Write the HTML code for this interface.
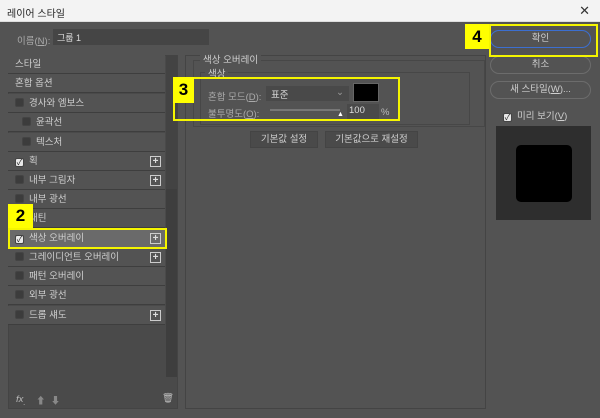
<!DOCTYPE html>
<html><head><meta charset="utf-8"><style>
*{margin:0;padding:0;box-sizing:border-box}
body{width:600px;height:418px;background:#535353;font-family:"Liberation Sans","Noto Sans CJK KR",sans-serif;font-size:9.5px;color:#cfcfcf;position:relative;overflow:hidden}
.a{position:absolute}
.title{left:0;top:0;width:600px;height:22px;background:#f3f3f3;color:#222;font-size:10px;padding:5px 7px;border-bottom:1px solid #ddd}
.row{position:absolute;left:8px;width:157px;height:19px;background:#535353;border-bottom:1px solid #3e3e3e;line-height:19px;padding-left:7px}
.cb{display:inline-block;width:9px;height:9px;background:#3c3c3c;border:1px solid #444;border-radius:2px;vertical-align:-1px;margin-right:5px}
.cb.on{background:#e8e8e8}
.cb.on::after{content:"✓";color:#222;font-size:8px;line-height:8px;display:block;text-align:center}
.plus{position:absolute;right:4px;top:4px;width:11px;height:11px;border:1px solid #ccc;color:#ddd;font-size:10px;line-height:9px;text-align:center;font-weight:bold}
.btn{position:absolute;left:490px;width:101px;height:18px;border:1px solid #6c6c6c;border-radius:9px;text-align:center;line-height:16px;color:#cfcfcf}
.yl{position:absolute;border:2px solid #f5f500}
.yn{position:absolute;background:#ffff00;color:#000;font-weight:bold;font-size:17px;text-align:center}
</style></head><body>
<div class="a title">레이어 스타일</div>
<div class="a" style="right:10px;top:3px;color:#333;font-size:13px">✕</div>
<div class="a" style="left:17px;top:33px;color:#aaa">이름(<u>N</u>):</div>
<div class="a" style="left:53px;top:29px;width:156px;height:16px;background:#454545;padding:2px 4px;color:#ddd;font-size:9px">그룹 1</div>

<div class="a" style="left:8px;top:55px;width:170px;height:354px;background:#4a4a4a;border:1px solid #444"></div>
<div class="a" style="left:166px;top:55px;width:11px;height:134px;background:#434343"></div>
<div class="a" style="left:166px;top:189px;width:11px;height:188px;background:#3e3e3e"></div>

<div class="row" style="top:55px">스타일</div>
<div class="row" style="top:74px">혼합 옵션</div>
<div class="row" style="top:94px"><span class="cb"></span>경사와 엠보스</div>
<div class="row" style="top:113px;padding-left:14px"><span class="cb"></span>윤곽선</div>
<div class="row" style="top:133px;padding-left:14px"><span class="cb"></span>텍스처</div>
<div class="row" style="top:152px"><span class="cb on"></span>획<span class="plus">+</span></div>
<div class="row" style="top:171px"><span class="cb"></span>내부 그림자<span class="plus">+</span></div>
<div class="row" style="top:190px"><span class="cb"></span>내부 광선</div>
<div class="row" style="top:209px"><span class="cb"></span>새틴</div>
<div class="row" style="top:229px;background:#6a6a6a"><span class="cb on"></span>색상 오버레이<span class="plus">+</span></div>
<div class="row" style="top:248px"><span class="cb"></span>그레이디언트 오버레이<span class="plus">+</span></div>
<div class="row" style="top:267px"><span class="cb"></span>패턴 오버레이</div>
<div class="row" style="top:286px"><span class="cb"></span>외부 광선</div>
<div class="row" style="top:306px"><span class="cb"></span>드롭 섀도<span class="plus">+</span></div>
<div class="a" style="left:16px;top:394px;font-style:italic;color:#bbb">fx<sub>.</sub></div>
<div class="a" style="left:36px;top:393px;color:#888">⬆ &nbsp;⬇</div>
<div class="a" style="left:162px;top:393px;color:#bbb">🗑</div>

<div class="a" style="left:185px;top:55px;width:301px;height:354px;border:1px solid #444"></div>
<div class="a" style="left:193px;top:60px;width:292px;height:67px;border:1px solid #474747"></div>
<div class="a" style="left:200px;top:52px;background:#535353;padding:0 3px">색상 오버레이</div>
<div class="a" style="left:200px;top:72px;width:270px;height:53px;border:1px solid #474747"></div>
<div class="a" style="left:205px;top:66px;background:#535353;padding:0 3px">색상</div>
<div class="a" style="left:208px;top:89px;color:#aaa">혼합 모드(<u>D</u>):</div>
<div class="a" style="left:266px;top:86px;width:83px;height:15px;background:#494949;padding:1px 5px;color:#ddd">표준<span style="float:right;color:#999">⌄</span></div>
<div class="a" style="left:353px;top:83px;width:26px;height:19px;background:#000;border:1px solid #666"></div>
<div class="a" style="left:208px;top:106px;color:#aaa">불투명도(<u>O</u>):</div>
<div class="a" style="left:270px;top:109px;width:70px;height:2px;background:#777"></div>
<div class="a" style="left:337px;top:111px;color:#fff;font-size:7px">▲</div>
<div class="a" style="left:347px;top:104px;width:32px;height:15px;background:#494949;padding:1px 2px;color:#ddd">100</div>
<div class="a" style="left:381px;top:107px;color:#bbb">%</div>
<div class="a" style="left:250px;top:131px;width:68px;height:17px;background:#4a4a4a;border:1px solid #444;text-align:center;line-height:15px">기본값 설정</div>
<div class="a" style="left:325px;top:131px;width:93px;height:17px;background:#4a4a4a;border:1px solid #444;text-align:center;line-height:15px">기본값으로 재설정</div>

<div class="btn" style="top:30px;border-color:#3c6fd0">확인</div>
<div class="btn" style="top:56px">취소</div>
<div class="btn" style="top:81px">새 스타일(<u>W</u>)...</div>
<div class="a" style="left:503px;top:108px"><span class="cb on"></span>미리 보기(<u>V</u>)</div>
<div class="a" style="left:496px;top:126px;width:95px;height:94px;background:#2e2e2e"></div>
<div class="a" style="left:516px;top:145px;width:56px;height:57px;background:#000;border-radius:5px"></div>

<div class="yl" style="left:8px;top:228px;width:159px;height:21px"></div>
<div class="yn" style="left:8px;top:204px;width:25px;height:24px;line-height:24px">2</div>
<div class="yl" style="left:173px;top:77px;width:227px;height:44px"></div>
<div class="yn" style="left:173px;top:77px;width:21px;height:26px;line-height:26px">3</div>
<div class="yl" style="left:489px;top:24px;width:109px;height:33px"></div>
<div class="yn" style="left:465px;top:24px;width:24px;height:25px;line-height:25px">4</div>
</body></html>
